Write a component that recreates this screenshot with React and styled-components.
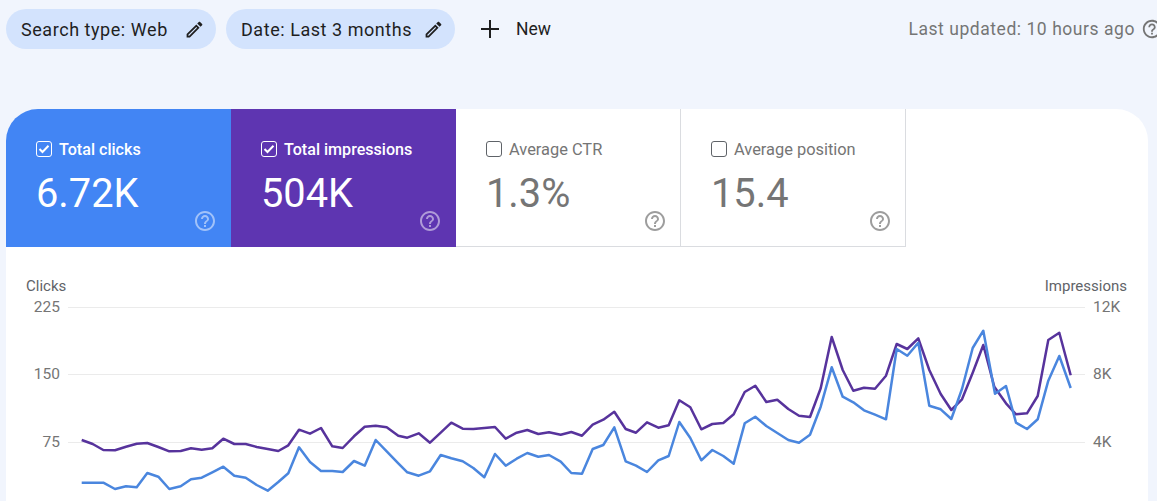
import React from 'react';
import styled, {createGlobalStyle} from 'styled-components';

const GlobalStyle = createGlobalStyle`
  html, body {
    margin: 0;
    height: 501px;
    overflow: hidden;
    background: #f1f5fd;
    font-family: Roboto, "Liberation Sans", sans-serif;
  }
`;

const EDIT_PATH =
  'M14.06 9.02l.92.92L5.92 19H5v-.92l9.06-9.06M17.66 3c-.25 0-.51.1-.7.29l-1.83 1.83 3.75 3.75 1.83-1.83c.39-.39.39-1.02 0-1.41l-2.34-2.34c-.2-.2-.45-.29-.71-.29zm-3.6 3.19L3 17.25V21h3.75L17.81 9.94l-3.75-3.75z';
const HELP_PATH =
  'M11 18h2v-2h-2v2zm1-16C6.48 2 2 6.48 2 12s4.48 10 10 10 10-4.48 10-10S17.52 2 12 2zm0 18c-4.41 0-8-3.59-8-8s3.59-8 8-8 8 3.59 8 8-3.59 8-8 8zm0-14c-2.21 0-4 1.79-4 4h2c0-1.1.9-2 2-2s2 .9 2 2c0 2-3 1.75-3 5h2c0-2.25 3-2.5 3-5 0-2.21-1.79-4-4-4z';

const Page = styled.div`
  padding: 9px 0 0 6px;
`;

const Toolbar = styled.div`
  display: flex;
  align-items: center;
  height: 40px;
  gap: 10px;
`;

const Chip = styled.div`
  display: flex;
  align-items: center;
  justify-content: space-between;
  box-sizing: border-box;
  width: ${props => props.width}px;
  height: 40px;
  padding: 0 11.5px 0 15px;
  border-radius: 20px;
  background: #d3e3fd;
  color: #1f1f1f;
  font-size: 18px;
  letter-spacing: 0.55px;
`;

const NewButton = styled.div`
  display: flex;
  align-items: center;
  gap: 17px;
  margin-left: 16px;
  color: #1f1f1f;
  font-size: 17.5px;
`;

const Spacer = styled.div`
  flex: 1;
`;

const Updated = styled.div`
  display: flex;
  align-items: center;
  gap: 6px;
  margin-right: -6px;
  color: #757575;
  font-size: 17.5px;
  letter-spacing: 0.55px;
`;

const Card = styled.div`
  width: 1142px;
  height: 500px;
  margin-top: 60px;
  border-radius: 32px 32px 0 0;
  background: #fff;
  overflow: hidden;
`;

const Tiles = styled.div`
  display: flex;
`;

const Tile = styled.div`
  position: relative;
  box-sizing: border-box;
  width: 225px;
  height: 138px;
  padding: 30px 0 0 30px;
  background: ${props => props.color || '#fff'};
  color: ${props => (props.color ? '#fff' : '#757575')};
  border-right: ${props => (props.color ? 'none' : '1px solid #dadce0')};
  border-bottom: ${props => (props.color ? 'none' : '1px solid #dadce0')};
`;

const TileLabel = styled.div`
  display: flex;
  align-items: center;
  gap: 7px;
  height: 20px;
  font-size: ${props => (props.active ? 16.1 : 16.4)}px;
  font-weight: ${props => (props.active ? 500 : 400)};
`;

const Check = styled.span`
  display: flex;
  align-items: center;
  justify-content: center;
  box-sizing: border-box;
  width: 16px;
  height: 16px;
  border: 1.2px solid ${props => (props.active ? '#fff' : '#5f6368')};
  border-radius: 3px;
`;

const TileValue = styled.div`
  margin: 10px 0 0 0;
  font-size: 39.8px;
  line-height: 50px;
`;

const TileHelp = styled.svg`
  position: absolute;
  right: ${props => (props.active ? 14 : 13)}px;
  bottom: ${props => (props.active ? 14 : 13)}px;
  width: 24px;
  height: 24px;
  fill: currentColor;
  opacity: ${props => (props.active ? 0.5 : 0.7)};
`;

const Chart = styled.div`
  padding: 29px 20px 0 20px;
`;

const AxisTitles = styled.div`
  display: flex;
  justify-content: space-between;
  padding-right: 1px;
  color: #5f6368;
  font-size: 15px;
  line-height: 20px;
`;

const Plot = styled.div`
  position: relative;
  margin-top: 11px;
`;

const GridRow = styled.div`
  display: flex;
  align-items: flex-start;
  height: 67.4px;
  color: #757575;
  font-size: 15.5px;
  line-height: 20px;
`;

const LeftTick = styled.div`
  width: 34px;
  margin-top: -10px;
  text-align: right;
`;

const RightTick = styled.div`
  width: 43px;
  margin-top: -10px;
  padding-left: 8px;
  box-sizing: border-box;
`;

const GridLine = styled.div`
  flex: 1;
  height: 1px;
  background: #ebebeb;
  margin-left: 8px;
`;

const LineChart = styled.svg`
  position: absolute;
  top: 0;
  left: 0;
  pointer-events: none;
`;

const purple = [
  [81.7, 440], [92.7, 444], [103.3, 450], [115, 450.3], [126, 446.7], [136.7, 443.7], [147.3, 443],
  [158.3, 447], [169.3, 451.3], [180.7, 451], [191, 448.3], [201.7, 449.7], [212.3, 448.3], [223.3, 438.7],
  [234.3, 444], [245.7, 444], [256.7, 447], [267.7, 449], [278.3, 451], [288.3, 445.3], [299, 429.7],
  [310, 433.7], [321, 428], [332.3, 446.3], [342.7, 448], [354, 436.3], [364.7, 426.7], [375.7, 425.7],
  [386.7, 427.3], [398.3, 435.7], [407.3, 437.7], [418.7, 433.3], [430, 442.7], [440.7, 432.7], [451.3, 422.7],
  [462.7, 428.7], [473.3, 429], [484.3, 428], [495, 427], [505.7, 438.7], [516.7, 432.7], [527.3, 430],
  [538.3, 434], [549, 432.3], [560.7, 434.7], [571.3, 432], [582, 435.7], [592.7, 424.7], [603.3, 419.7],
  [614.3, 411.7], [625.7, 429], [636, 432.7], [647, 422.3], [658.3, 427.7], [668.7, 425.3], [679.3, 400.3],
  [690.3, 407.3], [701.3, 429.3], [712.3, 424], [723.3, 423], [733.7, 414.3], [744.7, 392], [755.3, 385.7],
  [766.3, 402], [777.3, 399.7], [788.3, 409], [799, 415.7], [810, 417], [820.7, 388.3], [831.7, 337],
  [842.7, 370], [853.3, 390.7], [864, 387.7], [875, 388.7], [886, 375.7], [896.7, 344], [907.3, 349],
  [918.3, 338.3], [929.3, 370], [940.7, 394], [951.3, 410], [962, 399.3], [972.7, 372.7], [983.3, 345],
  [994.3, 386.7], [1006, 403.3], [1016, 414.3], [1027, 413.3], [1037.7, 396], [1048.3, 340], [1059.3, 332.7],
  [1070.7, 375.3],
];

const blue = [
  [81.7, 482.7], [92.7, 482.7], [103.3, 482.7], [115, 489], [126, 486.3], [136.7, 487.3], [147.3, 473],
  [158.3, 476.7], [169.3, 489], [180.7, 486.3], [191, 479.3], [201.7, 477.7], [212.3, 472.3], [223.3, 466.7],
  [234.3, 475.7], [245.7, 477.7], [256.7, 485], [267.7, 490.7], [278.3, 482], [288.3, 473.3], [299, 447.3],
  [310, 462], [321, 471], [332.3, 471], [342.7, 472], [354, 461], [364.7, 465.7], [375.7, 440],
  [386.7, 451.3], [398.3, 463.3], [407.3, 472.3], [418.7, 475.7], [430, 471.3], [440.7, 455], [451.3, 458.3],
  [462.7, 461.3], [473.3, 468], [484.3, 477.3], [495, 454], [505.7, 465.7], [516.7, 458.7], [527.3, 453],
  [538.3, 456.7], [549, 455], [560.7, 461.7], [571.3, 473], [582, 473.7], [592.7, 449], [603.3, 445],
  [614.3, 427.3], [625.7, 461.3], [636, 465.7], [647, 472], [658.3, 460.3], [668.7, 456], [679.3, 422],
  [690.3, 438], [701.3, 460.3], [712.3, 450], [723.3, 456], [733.7, 463.7], [744.7, 423.3], [755.3, 416.7],
  [766.3, 426], [777.3, 433], [788.3, 440], [799, 442.7], [810, 434.7], [820.7, 406.7], [831.7, 367.3],
  [842.7, 396.7], [853.3, 402.3], [864, 410.3], [875, 414.7], [886, 419.3], [896.7, 349], [907.3, 355.7],
  [918.3, 342.7], [929.3, 405.7], [940.7, 409.3], [951.3, 419], [962, 389], [972.7, 348], [983.3, 330.7],
  [995, 393.7], [1006, 386], [1016, 422.7], [1027, 429], [1037.7, 419.3], [1048.3, 380.7], [1059.3, 356],
  [1070.7, 388],
];

// the traced points are page coordinates, the plot starts at (26, 307)
const toPoints = line => line.map(([x, y]) => `${x - 26},${y - 307}`).join(' ');

const tiles = [
  {label: 'Total clicks', value: '6.72K', color: '#4285f4', active: true},
  {label: 'Total impressions', value: '504K', color: '#5e35b1', active: true},
  {label: 'Average CTR', value: '1.3%'},
  {label: 'Average position', value: '15.4'},
];

const ticks = [
  ['225', '12K'],
  ['150', '8K'],
  ['75', '4K'],
  ['0', '0'],
];

const Icon = ({path, size = 24}) => (
  <svg width={size} height={size} viewBox="0 0 24 24" fill="currentColor">
    <path d={path} />
  </svg>
);

const App = () => {
  return (
    <Page>
      <GlobalStyle />
      <Toolbar>
        <Chip width={210}>
          Search type: Web
          <Icon path={EDIT_PATH} size={21} />
        </Chip>
        <Chip width={229}>
          Date: Last 3 months
          <Icon path={EDIT_PATH} size={21} />
        </Chip>
        <NewButton>
          <svg width="18" height="18" viewBox="0 0 18 18" stroke="currentColor" strokeWidth="2">
            <path d="M9 0v18M0 9h18" />
          </svg>
          New
        </NewButton>
        <Spacer />
        <Updated>
          Last updated: 10 hours ago
          <Icon path={HELP_PATH} size={22} />
        </Updated>
      </Toolbar>
      <Card>
        <Tiles>
          {tiles.map(tile => (
            <Tile key={tile.label} color={tile.color}>
              <TileLabel active={tile.active}>
                <Check active={tile.active}>
                  {tile.active && (
                    <svg width="12" height="12" viewBox="0 0 12 12" fill="none" stroke="#fff" strokeWidth="2">
                      <path d="M1.5 6l3 3 6-6.2" />
                    </svg>
                  )}
                </Check>
                {tile.label}
              </TileLabel>
              <TileValue>{tile.value}</TileValue>
              <TileHelp active={tile.active} viewBox="0 0 24 24">
                <path d={HELP_PATH} />
              </TileHelp>
            </Tile>
          ))}
        </Tiles>
        <Chart>
          <AxisTitles>
            <span>Clicks</span>
            <span>Impressions</span>
          </AxisTitles>
          <Plot>
            {ticks.map(([left, right]) => (
              <GridRow key={left}>
                <LeftTick>{left}</LeftTick>
                <GridLine />
                <RightTick>{right}</RightTick>
              </GridRow>
            ))}
            <LineChart width="1100" height="204">
              <polyline points={toPoints(purple)} fill="none" stroke="#57339c" strokeWidth="2.5" strokeLinejoin="round" />
              <polyline points={toPoints(blue)} fill="none" stroke="#4a86de" strokeWidth="2.5" strokeLinejoin="round" />
            </LineChart>
          </Plot>
        </Chart>
      </Card>
    </Page>
  );
};

export default App;
